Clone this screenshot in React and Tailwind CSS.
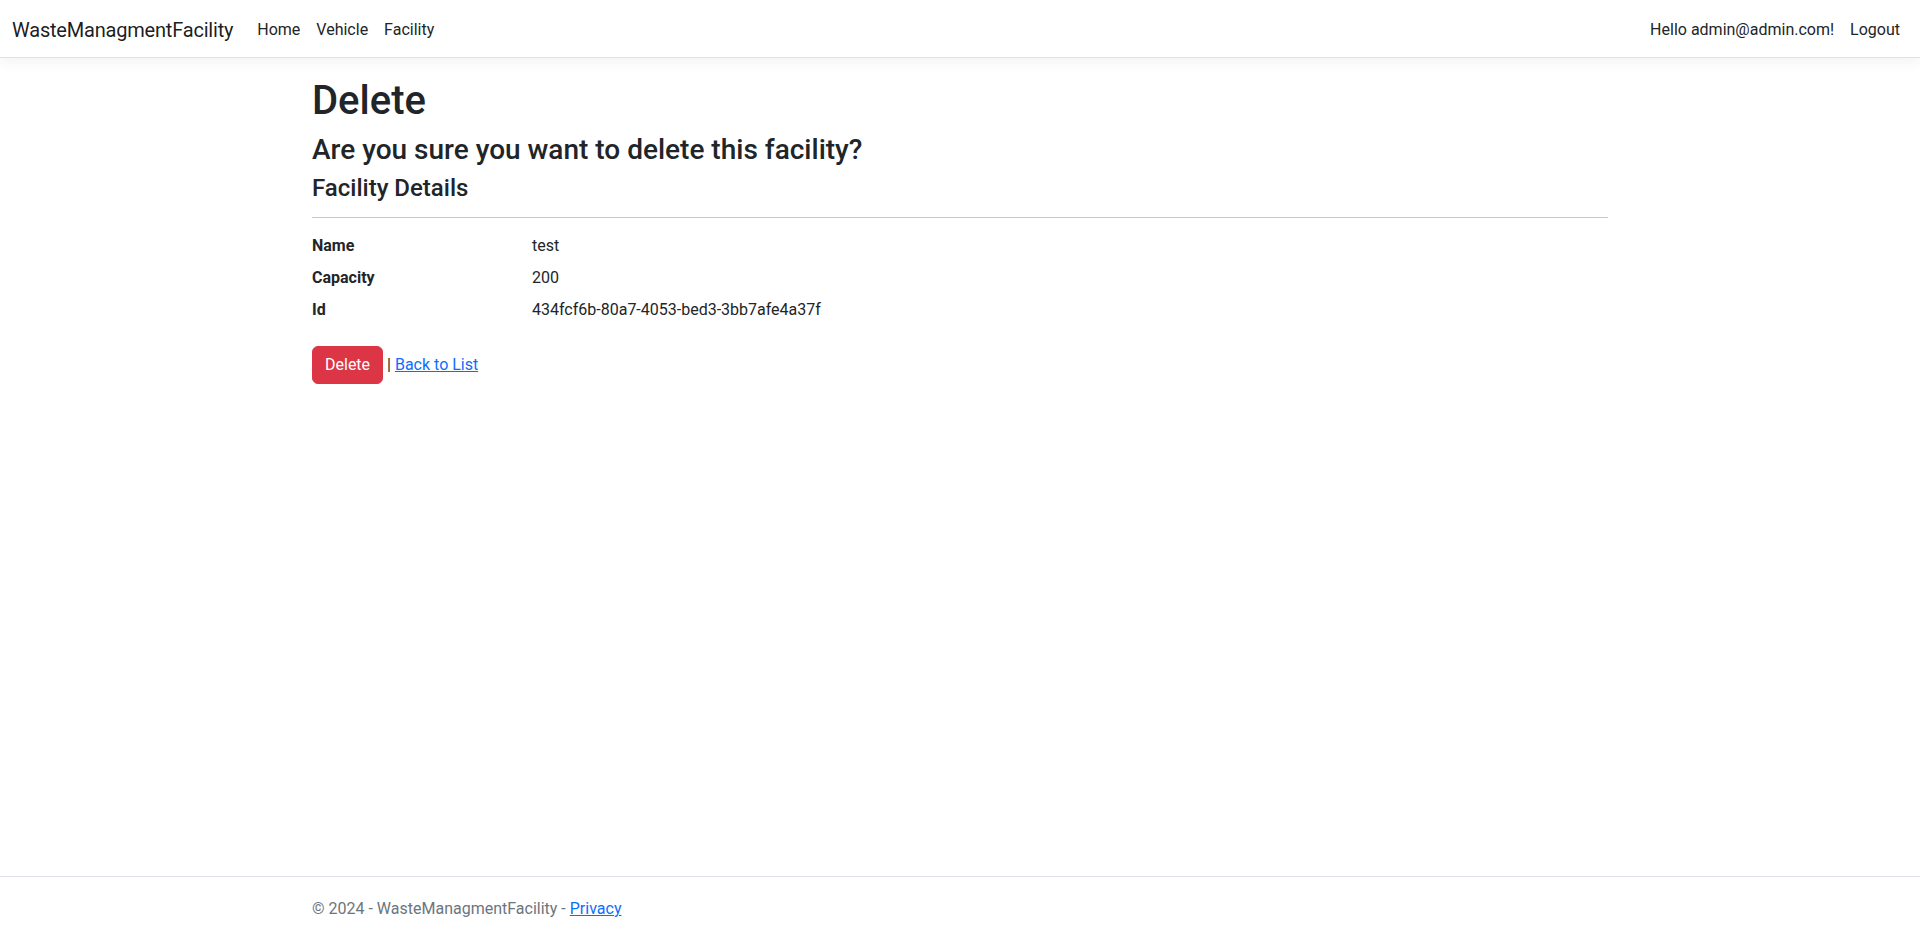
import React from 'react';

const facility = {
  name: 'test',
  capacity: 200,
  id: '434fcf6b-80a7-4053-bed3-3bb7afe4a37f'
};

const App = () => {
  return (
    <div className="min-h-[937px] flex flex-col bg-white text-[#212529] text-base leading-6 font-['Roboto','Liberation_Sans',sans-serif]">
      <header>
        <nav className="bg-white border-b border-[#dee2e6] shadow-[0_4px_12px_rgba(0,0,0,0.05)] mb-4 py-2">
          <div className="px-3 flex items-start h-[41px]">
            <a href="#" className="mr-4 pt-[7px] pb-[3px] text-[20px] leading-[30px] tracking-[-0.2px] text-black/90">
              WasteManagmentFacility
            </a>
            <ul className="flex flex-1">
              <li><a href="#" className="block px-2 pt-[10px] pb-[6px] text-[#212529]">Home</a></li>
              <li><a href="#" className="block px-2 pt-[10px] pb-[6px] text-[#212529]">Vehicle</a></li>
              <li><a href="#" className="block px-2 pt-[10px] pb-[6px] text-[#212529]">Facility</a></li>
            </ul>
            <ul className="flex">
              <li><a href="#" className="block px-2 pt-[10px] pb-[6px] text-[#212529]">Hello admin@admin.com!</a></li>
              <li>
                <button type="button" className="block px-2 pt-[10px] pb-[6px] text-[#212529]">Logout</button>
              </li>
            </ul>
          </div>
        </nav>
      </header>

      <main className="w-[1320px] mx-auto px-3 pb-4">
        <h1 className="mt-[3px] text-[40px] leading-[1.2] font-medium mb-2">Delete</h1>
        <h3 className="text-[28px] leading-[1.2] font-medium mb-[7px]">Are you sure you want to delete this facility?</h3>
        <div>
          <h4 className="text-[24px] leading-[1.2] font-medium">Facility Details</h4>
          <hr className="mt-[15px] mb-4 border-t border-[#212529] opacity-25" />
          <dl className="grid grid-cols-[220px_1fr] mb-4">
            <dt className="font-bold">Name</dt>
            <dd className="mb-2">{facility.name}</dd>
            <dt className="font-bold">Capacity</dt>
            <dd className="mb-2">{facility.capacity}</dd>
            <dt className="font-bold">Id</dt>
            <dd className="mb-2">{facility.id}</dd>
          </dl>

          <form onSubmit={(e) => e.preventDefault()}>
            <input
              type="submit"
              value="Delete"
              className="inline-block px-3 py-1.5 text-base leading-6 text-white bg-[#dc3545] border border-[#dc3545] rounded-md cursor-pointer"
            />{' '}
            | <a href="#" className="text-[#0d6efd] underline">Back to List</a>
          </form>
        </div>
      </main>

      <footer className="mt-auto border-t border-[#dee2e6] text-[#6c757d] pt-[4px] leading-[56px] whitespace-nowrap">
        <div className="w-[1320px] mx-auto px-3">
          &copy; 2024 - WasteManagmentFacility - <a href="#" className="text-[#0d6efd] underline">Privacy</a>
        </div>
      </footer>
    </div>
  );
};

export default App;
